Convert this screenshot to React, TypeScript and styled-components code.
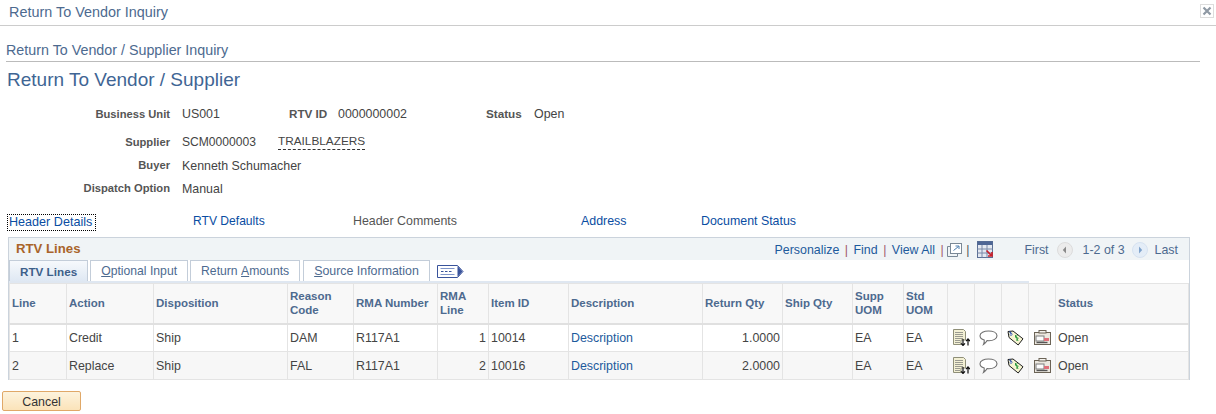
import React from 'react'
import styled, { createGlobalStyle } from 'styled-components'

const GlobalStyle = createGlobalStyle`
  html, body {
    margin: 0;
    padding: 0;
    background: #fff;
    font-family: "Liberation Sans", Arial, sans-serif;
    font-size: 12.4px;
    color: #444;
  }
`

type Row = {
  line: string;
  action: string;
  reason: string;
  rmaLine: string;
  item: string;
  qty: string;
}

const rows: Row[] = [
  { line: '1', action: 'Credit', reason: 'DAM', rmaLine: '1', item: '10014', qty: '1.0000' },
  { line: '2', action: 'Replace', reason: 'FAL', rmaLine: '2', item: '10016', qty: '2.0000' },
]

const colWidths = [57, 87, 134, 66, 84, 51, 80, 134, 80, 70, 51, 44, 27, 27, 27, 27, 133]

const DocIcon = () => (
  <svg width="17" height="17" viewBox="0 0 17 17">
    <path d="M.5.500h10l2 2V11H8v4.500H.5z" fill="#f3f0d4" stroke="#8f8f78" />
    <path d="M2 3.500h8M2 5.500h8M2 7.500h8M2 9.500h8M2 11.500h5M2 13.500h5" stroke="#9a9a90" />
    <path d="M10 10v6.500M8 14.300l2 2.200 2-2.200M15 16.500V10M13 12.200l2-2.200 2 2.200" fill="none" stroke="#111" strokeWidth="1.200" />
  </svg>
)

const BubbleIcon = () => (
  <svg width="19" height="16" viewBox="0 0 19 16">
    <path d="M9.500 1C14 1 18 2.700 18 5.800c0 3-3.700 4.900-8 4.900-.7 0-1.300 0-1.900-.1-.9 1.700-2 3-3.600 3.800.7-1.300.9-2.700.7-4.400C2.600 9.300 1 7.700 1 5.800 1 2.700 5 1 9.500 1z" fill="#fff" stroke="#6f6f6f" strokeWidth="1.100" />
  </svg>
)

const TagIcon = () => (
  <svg width="17" height="16" viewBox="0 0 17 16">
    <path d="M1 1.500l5-.5 10 7.800-4.800 6.200L2 7.500z" fill="#f7f5d2" stroke="#1f1f1f" />
    <path d="M2.500 1.500l2.500 3" stroke="#2f52a8" strokeWidth="1.200" />
    <circle cx="4" cy="4.500" r="1" fill="#fff" stroke="#2f52a8" strokeWidth="0.700" />
    <path d="M10.500 5.500L8 6.800l3.300 1.500-2.300 2.200M8.300 5l2.700 6" fill="none" stroke="#2b9a3e" strokeWidth="1" />
  </svg>
)

const TruckIcon = () => (
  <svg width="17" height="15" viewBox="0 0 17 15">
    <rect x="0.500" y="2.500" width="16" height="12" fill="#ece8e0" stroke="#6b6356" />
    <rect x="5" y="0.500" width="7" height="2.500" fill="#f6f4ef" stroke="#6b6356" />
    <rect x="2" y="6" width="8" height="5" fill="#fdfdfd" stroke="#7c7c7c" />
    <rect x="10" y="8" width="5" height="3" fill="#e0707a" />
    <path d="M2.500 12.500h11" stroke="#555" strokeWidth="1.400" />
  </svg>
)

const ArrowCircle = ({ dir, dim }: { dir: 'left' | 'right'; dim?: boolean }) => (
  <svg width="16" height="16" viewBox="0 0 16 16">
    <circle cx="8" cy="8" r="7.500" fill={dim ? '#ececec' : '#e4edf7'} stroke={dim ? '#dcdcdc' : '#d6e2f0'} />
    <path d={dir === 'left' ? 'M9 4.500v7L5.800 8z' : 'M7 4.500v7L10.200 8z'} fill={dim ? '#8a8a8a' : '#7fa3cc'} />
  </svg>
)

const PopoutIcon = () => (
  <svg width="15" height="14" viewBox="0 0 15 14">
    <path d="M3.500 3.500H.500v10h10v-3" fill="none" stroke="#7a8896" />
    <rect x="3.500" y="0.500" width="11" height="10" fill="#fff" stroke="#7a8896" />
    <path d="M6.500 7.500l5-4M8.500 3H12v3" fill="none" stroke="#4a7cae" />
  </svg>
)

const DownloadGridIcon = () => (
  <svg width="16" height="17" viewBox="0 0 16 17">
    <rect x="0.500" y="0.500" width="15" height="16" fill="#e3e8f1" stroke="#5b6f95" />
    <rect x="0.500" y="0.500" width="15" height="3.500" fill="#4d6695" />
    <path d="M5 4v12.500M10 4v12.500M.5 8h15M.5 12h15" stroke="#7a8aa8" />
    <path d="M9.500 9.500l5 5M15 11v4h-4" fill="none" stroke="#c8202b" strokeWidth="1.700" />
  </svg>
)

const TabsMenuIcon = () => (
  <svg width="27" height="13" viewBox="0 0 27 13">
    <path d="M.5.500h20l5.500 6-5.500 6H.5z" fill="#fff" stroke="#39539b" />
    <path d="M20.500 1v11L25.500 6.500z" fill="#39539b" />
    <path d="M3.500 3.500h14M3.500 9.500h14" stroke="#7f95c8" />
    <path d="M4 6.500h2.500M8 6.500h2.500M12 6.500h2.500" stroke="#39539b" />
  </svg>
)

export default function App() {
  return (
    <>
      <GlobalStyle />
      <Page>
        <TitleBar>
          <WindowTitle>Return To Vendor Inquiry</WindowTitle>
          <CloseButton>
            <svg width="10" height="10" viewBox="0 0 10 10">
              <path d="M1.500 1.500l7 7M8.500 1.500l-7 7" stroke="#8f99a4" strokeWidth="2.200" />
            </svg>
          </CloseButton>
        </TitleBar>
        <Breadcrumb>Return To Vendor / Supplier Inquiry</Breadcrumb>
        <PageTitle>Return To Vendor / Supplier</PageTitle>

        <Fields>
          <FieldRow $height={32}>
            <Label>Business Unit</Label>
            <Value $width={107}>US001</Value>
            <InlineLabel $width={49}>RTV ID</InlineLabel>
            <Value $width={148}>0000000002</Value>
            <InlineLabel $width={48}>Status</InlineLabel>
            <Value $width={60}>Open</Value>
          </FieldRow>
          <FieldRow $height={24}>
            <Label>Supplier</Label>
            <Value $width={96} $size={12.1}>SCM0000003</Value>
            <DottedValue>TRAILBLAZERS</DottedValue>
          </FieldRow>
          <FieldRow $height={23}>
            <Label>Buyer</Label>
            <Value $width={200}>Kenneth Schumacher</Value>
          </FieldRow>
          <FieldRow $height={23}>
            <Label>Dispatch Option</Label>
            <Value $width={100}>Manual</Value>
          </FieldRow>
        </Fields>

        <LinkRow>
          <FocusedLink>Header Details</FocusedLink>
          <PlainLink $width={160} $size={12.1}>RTV Defaults</PlainLink>
          <GreyLink>Header Comments</GreyLink>
          <PlainLink $width={120}>Address</PlainLink>
          <PlainLink $width={140}>Document Status</PlainLink>
        </LinkRow>

        <GridBox>
          <GridHeader>
            <GridTitle>RTV Lines</GridTitle>
            <GridNav>
              <NavLink>Personalize</NavLink>
              <Divider>|</Divider>
              <NavLink>Find</NavLink>
              <Divider>|</Divider>
              <NavLink>View All</NavLink>
              <Divider $right={3.5}>|</Divider>
              <PopoutIcon />
              <DarkDivider>|</DarkDivider>
              <DownloadGridIcon />
              <PagerText $left={31}>First</PagerText>
              <PagerArrow $left={8}><ArrowCircle dir="left" dim /></PagerArrow>
              <PagerText $left={10}>1-2 of 3</PagerText>
              <PagerArrow $left={7}><ArrowCircle dir="right" /></PagerArrow>
              <PagerText $left={7}>Last</PagerText>
            </GridNav>
          </GridHeader>

          <TabStrip>
            <Tab $active>RTV Lines</Tab>
            <Tab>
              <u>O</u>ptional Input
            </Tab>
            <Tab>
              Return <u>A</u>mounts
            </Tab>
            <Tab $left={1} $size={12.4}>
              <u>S</u>ource Information
            </Tab>
            <TabsMenu><TabsMenuIcon /></TabsMenu>
          </TabStrip>

          <Table>
            <colgroup>
              {colWidths.map((w, i) => (
                <col key={i} style={{ width: w }} />
              ))}
            </colgroup>
            <thead>
              <tr>
                <Th>Line</Th>
                <Th>Action</Th>
                <Th>Disposition</Th>
                <Th>Reason<br />Code</Th>
                <Th>RMA Number</Th>
                <Th>RMA<br />Line</Th>
                <Th>Item ID</Th>
                <Th>Description</Th>
                <Th>Return Qty</Th>
                <Th>Ship Qty</Th>
                <Th>Supp<br />UOM</Th>
                <Th>Std<br />UOM</Th>
                <Th />
                <Th />
                <Th />
                <Th />
                <Th>Status</Th>
              </tr>
            </thead>
            <tbody>
              {rows.map((r, i) => (
                <Tr key={r.line} $alt={i % 2 === 1}>
                  <Td>{r.line}</Td>
                  <Td>{r.action}</Td>
                  <Td>Ship</Td>
                  <Td>{r.reason}</Td>
                  <Td>R117A1</Td>
                  <Td $right>{r.rmaLine}</Td>
                  <Td>{r.item}</Td>
                  <Td><DescLink>Description</DescLink></Td>
                  <Td $right>{r.qty}</Td>
                  <Td />
                  <Td>EA</Td>
                  <Td>EA</Td>
                  <IconTd><DocIcon /></IconTd>
                  <IconTd><BubbleIcon /></IconTd>
                  <IconTd><TagIcon /></IconTd>
                  <IconTd><TruckIcon /></IconTd>
                  <Td>Open</Td>
                </Tr>
              ))}
            </tbody>
          </Table>
        </GridBox>

        <CancelButton>Cancel</CancelButton>
      </Page>
    </>
  )
}

const Page = styled.div`
  width: 1216px;
  height: 414px;
  overflow: hidden;
`

const TitleBar = styled.div`
  display: flex;
  align-items: center;
  justify-content: space-between;
  box-sizing: border-box;
  height: 26px;
  padding: 0 2px 2px 9px;
  border-bottom: 1px solid #ccc;
`

const WindowTitle = styled.div`
  font-size: 14.4px;
  color: #4d6a8f;
`

const CloseButton = styled.div`
  display: flex;
  align-items: center;
  justify-content: center;
  width: 12px;
  height: 12px;
  margin-bottom: 2px;
  border: 1px solid #ddd;
`

const Breadcrumb = styled.div`
  box-sizing: border-box;
  width: 1194px;
  height: 36px;
  margin-left: 6px;
  padding-top: 15px;
  font-size: 14.3px;
  line-height: 18px;
  color: #4d6a8f;
  border-bottom: 1px solid #bbb;
`

const PageTitle = styled.h1`
  margin: 0 0 0 7px;
  height: 36px;
  font-size: 19px;
  font-weight: normal;
  line-height: 36px;
  color: #3f6594;
`

const Fields = styled.div`
  display: flex;
  flex-direction: column;
`

const FieldRow = styled.div<{ $height: number }>`
  display: flex;
  align-items: center;
  height: ${p => p.$height}px;
`

const Label = styled.div`
  width: 170px;
  margin-right: 12px;
  padding-bottom: 1px;
  font-size: 11.2px;
  font-weight: bold;
  text-align: right;
  color: #555;
`

const InlineLabel = styled.div<{ $width: number }>`
  width: ${p => p.$width}px;
  padding-bottom: 1px;
  font-size: 11.7px;
  font-weight: bold;
  color: #555;
`

const Value = styled.div<{ $width: number; $size?: number }>`
  width: ${p => p.$width}px;
  font-size: ${p => p.$size ?? 12.4}px;
  color: #444;
`

const DottedValue = styled.div`
  font-size: 11.8px;
  color: #444;
  border-bottom: 1px dashed #333;
  line-height: 15px;
`

const LinkRow = styled.div`
  display: flex;
  align-items: flex-start;
  height: 17px;
  margin-top: 14px;
  padding-left: 7px;
  line-height: 15px;
`

const FocusedLink = styled.div`
  box-sizing: border-box;
  position: relative;
  width: 186px;
  height: 17px;
  padding: 1px 2px;
  font-size: 12.6px;
  color: #0a4da2;
  line-height: 14px;
  &::after {
    content: '';
    position: absolute;
    left: 0;
    top: 0;
    width: 87px;
    height: 15px;
    border: 1px dotted #000;
  }
`

const PlainLink = styled.div<{ $width: number; $size?: number }>`
  width: ${p => p.$width}px;
  font-size: ${p => p.$size ?? 12.4}px;
  color: #0a4da2;
`

const GreyLink = styled.div`
  width: 228px;
  color: #555;
`

const GridBox = styled.div`
  box-sizing: border-box;
  width: 1182px;
  height: 143px;
  margin: 6px 0 0 8px;
  border-top: 1px solid #cbd3dc;
  border-left: 1px solid #cbd3dc;
  border-right: 1px solid #cbd3dc;
`

const GridHeader = styled.div`
  display: flex;
  align-items: center;
  justify-content: space-between;
  height: 22px;
  padding: 0 11px 0 7px;
  background: #f0f4f6;
`

const GridTitle = styled.div`
  padding-bottom: 2px;
  font-size: 13.2px;
  font-weight: bold;
  color: #a9642a;
`

const GridNav = styled.div`
  display: flex;
  align-items: center;
  padding-top: 1px;
`

const NavLink = styled.span`
  color: #1d5a9c;
`

const Divider = styled.span<{ $right?: number }>`
  margin: 0 ${p => p.$right ?? 5.5}px 0 5.5px;
  color: #a0566a;
`

const DarkDivider = styled.span`
  margin: 0 8px 0 4px;
  color: #555;
`

const PagerText = styled.span<{ $left: number }>`
  margin-left: ${p => p.$left}px;
  color: #4d6a8f;
`

const PagerArrow = styled.span<{ $left: number }>`
  display: flex;
  margin-left: ${p => p.$left}px;
`

const TabStrip = styled.div`
  display: flex;
  align-items: flex-end;
  gap: 2px;
  width: 1020px;
  height: 21px;
  border-bottom: 2px solid #dfe7f1;
`

const Tab = styled.div<{ $active?: boolean; $left?: number; $size?: number }>`
  box-sizing: border-box;
  display: flex;
  align-items: center;
  white-space: pre;
  height: 21px;
  margin-left: ${p => p.$left ?? 0}px;
  padding: 0 10px;
  color: ${p => (p.$active ? '#3d5f8a' : '#4d6a8f')};
  font-size: ${p => (p.$active ? 11.7 : p.$size ?? 12.2)}px;
  font-weight: ${p => (p.$active ? 'bold' : 'normal')};
  background: ${p => (p.$active ? 'linear-gradient(#f6f9fc, #dfe8f3)' : '#fff')};
  border: 1px solid #c3cdd9;
  border-bottom: none;
`

const TabsMenu = styled.div`
  display: flex;
  align-items: center;
  height: 20px;
  margin-left: 5px;
`

const Table = styled.table`
  table-layout: fixed;
  width: 1179px;
  border-collapse: collapse;
`

const Th = styled.th`
  box-sizing: border-box;
  height: 40px;
  padding: 0 2px;
  font-size: 11.5px;
  font-weight: bold;
  line-height: 14px;
  text-align: left;
  color: #4d6a8f;
  background: #f8f8f8;
  border: 1px solid #e4e4e4;
  border-bottom: 2px solid #e0e0e0;
`

const Tr = styled.tr<{ $alt: boolean }>`
  background: ${p => (p.$alt ? '#f7f7f7' : '#fff')};
`

const Td = styled.td<{ $right?: boolean }>`
  box-sizing: border-box;
  height: 28px;
  padding: 0 2px;
  color: #444;
  text-align: ${p => (p.$right ? 'right' : 'left')};
  border: 1px solid #e4e4e4;
`

const IconTd = styled.td`
  padding: 0;
  text-align: center;
  border: 1px solid #e4e4e4;
  svg {
    display: block;
    margin: 0 auto;
  }
`

const DescLink = styled.span`
  color: #1d5a9c;
`

const CancelButton = styled.button`
  display: block;
  box-sizing: border-box;
  width: 79px;
  height: 20px;
  margin: 11px 0 0 2px;
  padding: 1px 0 0;
  font-family: inherit;
  font-size: 12.4px;
  color: #333;
  background: linear-gradient(#fdf3dd, #fbe3b9);
  border: 1px solid #e0a868;
  border-radius: 2px;
`
